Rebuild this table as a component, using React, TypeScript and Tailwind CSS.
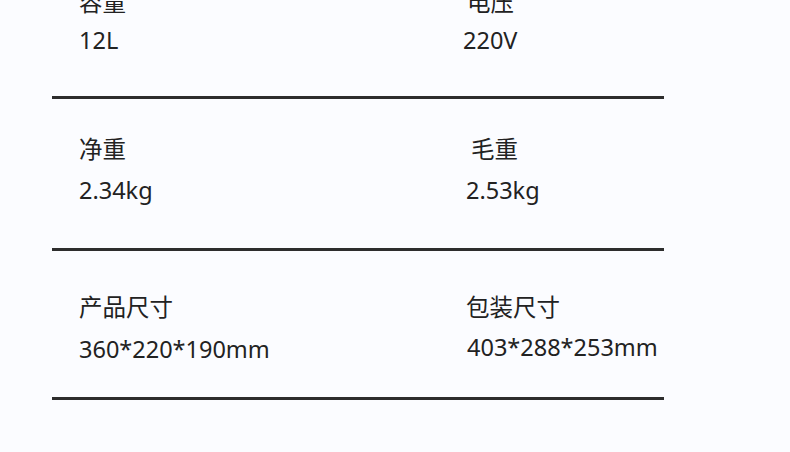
const rows = [
  {
    pt: "pt-0",
    pb: "pb-[41px]",
    mt: "mt-[-13px]",
    gap: "gap-[8px]",
    left: { label: "容量", value: "12L", lx: "", vx: "" },
    right: { label: "电压", value: "220V", lx: "ml-[1px]", vx: "ml-[-3px]" },
  },
  {
    pt: "pt-[35px]",
    pb: "pb-[43px]",
    mt: "",
    gap: "gap-[11px]",
    left: { label: "净重", value: "2.34kg", lx: "", vx: "" },
    right: { label: "毛重", value: "2.53kg", lx: "ml-[5px]", vx: "" },
  },
  {
    pt: "pt-[41px]",
    pb: "pb-[33px]",
    mt: "",
    gap: "gap-[12px]",
    left: { label: "产品尺寸", value: "360*220*190mm", lx: "", vx: "" },
    right: { label: "包装尺寸", value: "403*288*253mm", lx: "", vx: "ml-[1px] mt-[-2px]" },
  },
];

function Cell({ label, value, lx, vx, gap }: { label: string; value: string; lx: string; vx: string; gap: string }) {
  return (
    <div className={`flex flex-col ${gap}`}>
      <div className={`leading-[30px] ${lx}`}>{label}</div>
      <div className={`leading-[30px] ${vx}`}>{value}</div>
    </div>
  );
}

export default function App() {
  return (
    <div
      className="h-[452px] w-[790px] overflow-hidden bg-[#fbfcff] text-[23.5px] text-[#222222]"
      style={{ fontFamily: '"Noto Sans", "Noto Sans CJK SC", sans-serif' }}
    >
      <div className="ml-[52px] w-[612px]">
        {rows.map((r, i) => (
          <div key={i} className={r.mt}>
            <div className={`flex ${r.pt} ${r.pb}`}>
              <div className="w-[414px] pl-[27px]">
                <Cell {...r.left} gap={r.gap} />
              </div>
              <div className="flex-1">
                <Cell {...r.right} gap={r.gap} />
              </div>
            </div>
            <div className="h-[3px] bg-[#2d2d2d]" />
          </div>
        ))}
      </div>
    </div>
  );
}
